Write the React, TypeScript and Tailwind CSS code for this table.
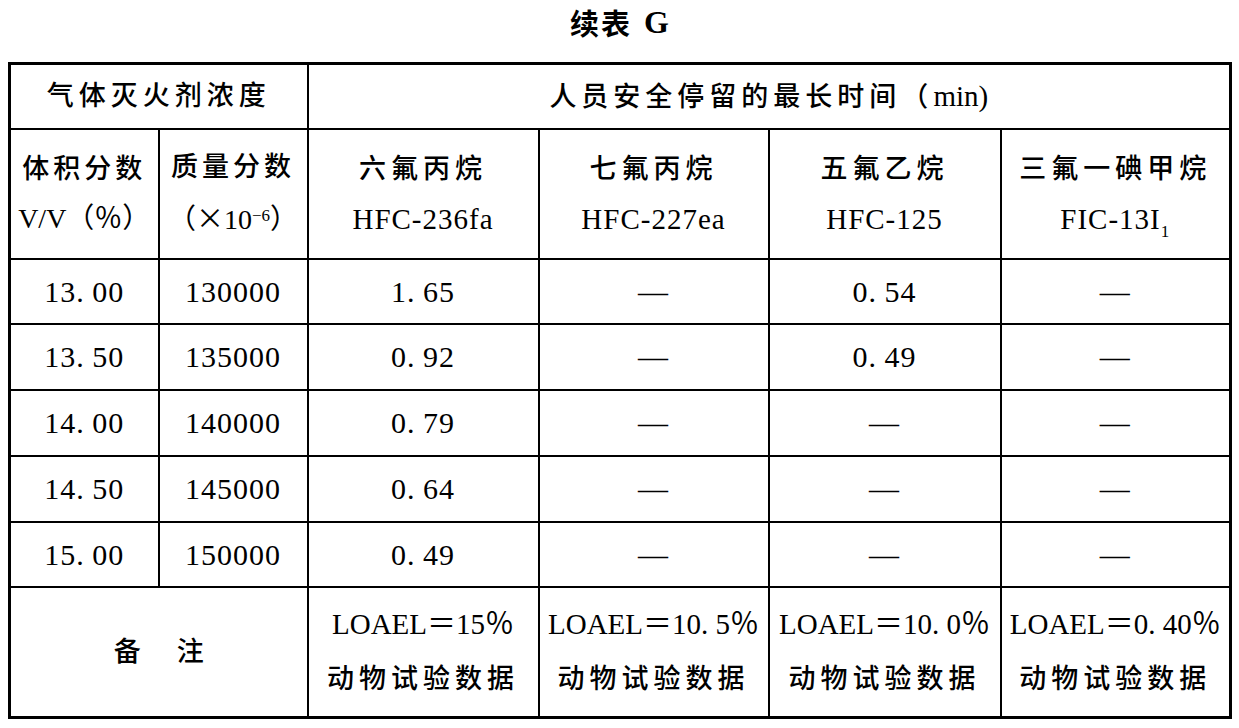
import React from "react";

type Pair = { zh: string; code: React.ReactNode };

const agents: Pair[] = [
  { zh: "六氟丙烷", code: "HFC-236fa" },
  { zh: "七氟丙烷", code: "HFC-227ea" },
  { zh: "五氟乙烷", code: "HFC-125" },
  {
    zh: "三氟一碘甲烷",
    code: (
      <>
        FIC-13I<sub className="text-[17px] align-[-4px]">1</sub>
      </>
    ),
  },
];

const rows: string[][] = [
  ["13.00", "130000", "1.65", "—", "0.54", "—"],
  ["13.50", "135000", "0.92", "—", "0.49", "—"],
  ["14.00", "140000", "0.79", "—", "—", "—"],
  ["14.50", "145000", "0.64", "—", "—", "—"],
  ["15.00", "150000", "0.49", "—", "—", "—"],
];

const notes = ["15", "10.5", "10.0", "0.40"];

// the scanned digits have a half-width period, so widen the dot a bit
function Num({ v }: { v: string }) {
  const parts = v.split(".");
  if (parts.length < 2) return <>{v}</>;
  return (
    <>
      {parts[0]}
      <span className="mr-[0.25em]">.</span>
      {parts[1]}
    </>
  );
}

export default function App() {
  return (
    <div className="w-[1239px] h-[728px] bg-white text-black font-['Liberation_Serif','Noto_Sans_CJK_SC',serif]">
      {/* title */}
      <div className="flex justify-center items-center h-[30px] mt-[7px]">
        <span className="font-['Noto_Sans_CJK_SC',sans-serif] font-bold text-[29px] tracking-[2px] leading-none">
          续表
        </span>
        <span className="font-bold text-[32px] leading-none ml-[12px]">G</span>
      </div>

      <table className="mt-[25px] ml-[8px] w-[1221px] table-fixed border-collapse border-[3px] border-black text-center">
        <colgroup>
          <col className="w-[149px]" />
          <col className="w-[149px]" />
          <col className="w-[231px]" />
          <col className="w-[230px]" />
          <col className="w-[232px]" />
          <col className="w-[230px]" />
        </colgroup>
        <tbody>
          <tr className="h-[65px]">
            <td colSpan={2} className="border-2 border-black align-middle">
              <span className="text-[27px] font-medium tracking-[5px]">气体灭火剂浓度</span>
            </td>
            <td colSpan={4} className="border-2 border-black align-middle">
              <span className="text-[27px] font-medium tracking-[5px]">人员安全停留的最长时间（</span>
              <span className="text-[29px]">min)</span>
            </td>
          </tr>

          <tr className="h-[130px]">
            <td className="border-2 border-black align-middle">
              <div className="text-[27px] font-medium tracking-[4px] leading-[50px] whitespace-nowrap">体积分数</div>
              <div className="text-[28px] leading-[50px] whitespace-nowrap">V/V（％）</div>
            </td>
            <td className="border-2 border-black align-middle">
              <div className="text-[27px] font-medium tracking-[4px] leading-[50px] whitespace-nowrap">质量分数</div>
              <div className="text-[28px] leading-[50px] whitespace-nowrap">
                （<span className="font-['Noto_Sans_CJK_SC',sans-serif]">×</span>10
                <sup className="text-[17px]">−6</sup>）
              </div>
            </td>
            {agents.map((a) => (
              <td key={a.zh} className="border-2 border-black align-middle">
                <div className="text-[27px] font-medium tracking-[5px] leading-[50px] whitespace-nowrap">{a.zh}</div>
                <div className="text-[29px] tracking-[1px] leading-[50px] whitespace-nowrap">{a.code}</div>
              </td>
            ))}
          </tr>

          {rows.map((r, i) => (
            <tr key={i} className={i === 0 || i === 4 ? "h-[65px]" : "h-[66px]"}>
              {r.map((c, j) => (
                <td key={j} className="border-2 border-black align-middle text-[30px] tracking-[1px]">
                  <Num v={c} />
                </td>
              ))}
            </tr>
          ))}

          <tr className="h-[131px]">
            <td colSpan={2} className="border-2 border-black align-middle">
              <span className="text-[27px] font-medium">备</span>
              <span className="text-[27px] font-medium ml-[36px]">注</span>
            </td>
            {notes.map((n) => (
              <td key={n} className="border-2 border-black align-middle">
                <div className="text-[29px] leading-[55px] whitespace-nowrap">
                  LOAEL＝<Num v={n} />％
                </div>
                <div className="text-[27px] font-medium tracking-[5px] leading-[55px] whitespace-nowrap">动物试验数据</div>
              </td>
            ))}
          </tr>
        </tbody>
      </table>
    </div>
  );
}
